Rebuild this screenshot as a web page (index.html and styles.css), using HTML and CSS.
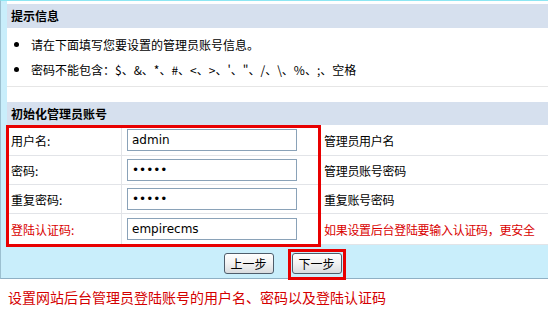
FILE: index.html
```html
<!DOCTYPE html>
<html lang="zh-CN">
<head>
<meta charset="utf-8">
<title>初始化管理员账号</title>
<link rel="stylesheet" href="styles.css">
</head>
<body>
<div class="frame">
  <div class="content">
    <section class="panel tips">
      <div class="ph">提示信息</div>
      <ul class="tips-list">
        <li>请在下面填写您要设置的管理员账号信息。</li>
        <li>密码不能包含：$、&amp;、*、#、&lt;、&gt;、'、"、/、\、%、;、空格</li>
      </ul>
    </section>
    <section class="panel form">
      <div class="ph">初始化管理员账号</div>
      <div class="form-body">
        <div class="cell label">用户名:</div>
        <div class="cell field"><input class="inp" type="text" value="admin"></div>
        <div class="cell hint">管理员用户名</div>

        <div class="cell label">密码:</div>
        <div class="cell field"><input class="inp" type="password" value="admin"></div>
        <div class="cell hint">管理员账号密码</div>

        <div class="cell label">重复密码:</div>
        <div class="cell field"><input class="inp" type="password" value="admin"></div>
        <div class="cell hint">重复账号密码</div>

        <div class="cell label red">登陆认证码:</div>
        <div class="cell field"><input class="inp" type="text" value="empirecms"></div>
        <div class="cell hint red">如果设置后台登陆要输入认证码，更安全</div>

        <div class="mark"></div>
      </div>
    </section>
  </div>
  <div class="bar">
    <button class="btn prev" type="button">上一步</button>
    <div class="next-mark"><button class="btn" type="button">下一步</button></div>
  </div>
</div>
<p class="caption">设置网站后台管理员登陆账号的用户名、密码以及登陆认证码</p>
</body>
</html>
```

FILE: styles.css
```css
html, body {
  margin: 0;
  padding: 0;
  background: #ffffff;
}
body {
  width: 548px;
  font-family: "Noto Sans CJK SC", "Noto Sans", sans-serif;
  font-size: 12px;
  color: #000;
}
.frame {
  background: #c9eefb;
  border-top: 1px solid #8de6f2;
  border-left: 1px solid #9cc0d0;
  border-bottom: 1px solid #8fb0c4;
}
.content {
  margin-left: 6px;
  background: #ffffff;
  padding-top: 3px;
}
.ph {
  height: 24px;
  line-height: 24px;
  padding-left: 4px;
  background: #d6e0ee;
  font-weight: bold;
  font-size: 12px;
}
.tips {
  border-bottom: 1px solid #e6e6e6;
}
.tips-list {
  margin: 0;
  padding: 4px 0 4px 24px;
  list-style: disc;
}
.tips-list li {
  line-height: 25px;
  height: 25px;
}
.tips-list li::marker {
  font-size: 13px;
}
.form {
  margin-top: 15px;
}
.form .ph {
  height: 23px;
  line-height: 23px;
}
.form-body {
  position: relative;
  display: grid;
  grid-template-columns: 115px 198px 1fr;
  grid-template-rows: 31px 29px 29px 31px;
}
.cell {
  display: flex;
  align-items: center;
  border-bottom: 1px solid #e2e4e8;
  box-sizing: border-box;
  white-space: nowrap;
}
.label {
  padding-left: 4px;
  border-right: 1px solid #e2e4e8;
}
.field {
  padding-left: 5px;
  border-right: 1px solid #e2e4e8;
}
.hint {
  padding-left: 4px;
  letter-spacing: -0.3px;
}
.red {
  color: #d90000;
}
.inp {
  width: 170px;
  height: 22px;
  box-sizing: border-box;
  margin: 0;
  border: 1px solid #8aa2b8;
  padding: 0 4px;
  font-family: "DejaVu Sans", sans-serif;
  font-size: 12px;
  color: #000;
  background: #fff;
  outline: none;
}
.mark {
  position: absolute;
  left: -1px;
  top: 0;
  width: 315px;
  height: 122px;
  box-sizing: border-box;
  border: 3px solid #e80000;
  pointer-events: none;
}
.bar {
  height: 33px;
  display: flex;
  justify-content: center;
  align-items: flex-start;
  gap: 14px;
  padding-left: 20px;
  padding-top: 4px;
  box-sizing: border-box;
}
.btn {
  width: 50px;
  height: 21px;
  margin: 0;
  padding: 0;
  border: 1px solid #4f5d6b;
  border-radius: 3px;
  background: linear-gradient(#ffffff, #f2f2f2 50%, #d9dcdf);
  font-family: "Noto Sans CJK SC", sans-serif;
  font-size: 12px;
  line-height: 19px;
  color: #000;
  display: block;
}
.prev {
  margin-top: 4px;
}
.next-mark {
  border: 3px solid #e80000;
  padding: 1px;
  height: 23px;
}
.caption {
  margin: 8px 0 0 8px;
  font-size: 14px;
  line-height: 20px;
  color: #d40000;
}
```
